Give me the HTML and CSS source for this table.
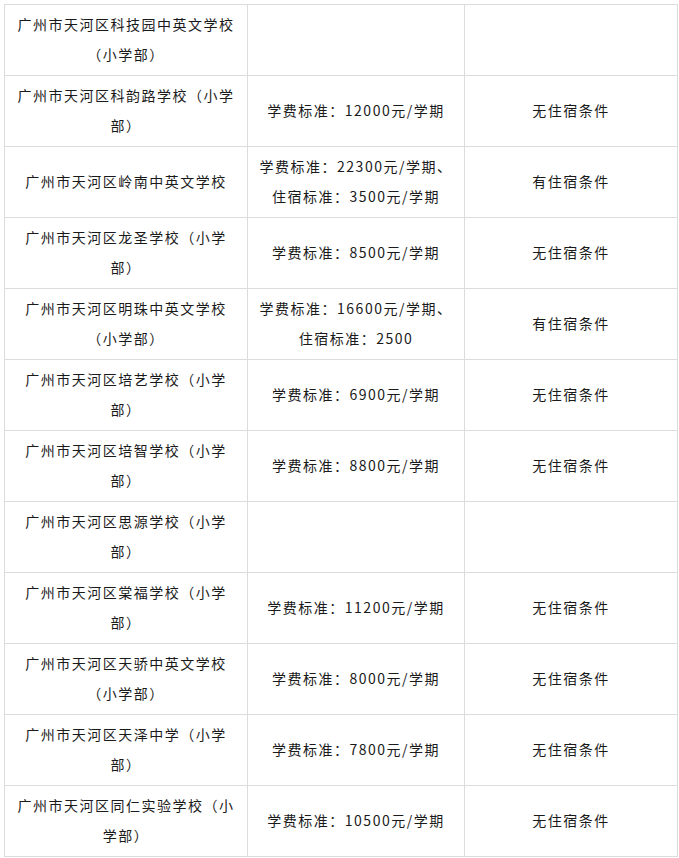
FILE: index.html
```html
<!DOCTYPE html>
<html lang="zh-CN">
<head>
<meta charset="utf-8">
<title>学校收费</title>
<link rel="stylesheet" href="styles.css">
</head>
<body>
<table class="fees">
  <colgroup>
    <col class="c-name">
    <col class="c-fee">
    <col class="c-room">
  </colgroup>
  <tbody>
    <tr><td>广州市天河区科技园中英文学校（小学部）</td><td></td><td></td></tr>
    <tr><td>广州市天河区科韵路学校（小学部）</td><td>学费标准：12000元/学期</td><td>无住宿条件</td></tr>
    <tr><td>广州市天河区岭南中英文学校</td><td>学费标准：22300元/学期、<br>住宿标准：3500元/学期</td><td>有住宿条件</td></tr>
    <tr><td>广州市天河区龙圣学校（小学部）</td><td>学费标准：8500元/学期</td><td>无住宿条件</td></tr>
    <tr><td>广州市天河区明珠中英文学校（小学部）</td><td>学费标准：16600元/学期、<br>住宿标准：2500</td><td>有住宿条件</td></tr>
    <tr><td>广州市天河区培艺学校（小学部）</td><td>学费标准：6900元/学期</td><td>无住宿条件</td></tr>
    <tr><td>广州市天河区培智学校（小学部）</td><td>学费标准：8800元/学期</td><td>无住宿条件</td></tr>
    <tr><td>广州市天河区思源学校（小学部）</td><td></td><td></td></tr>
    <tr><td>广州市天河区棠福学校（小学部）</td><td>学费标准：11200元/学期</td><td>无住宿条件</td></tr>
    <tr><td>广州市天河区天骄中英文学校（小学部）</td><td>学费标准：8000元/学期</td><td>无住宿条件</td></tr>
    <tr><td>广州市天河区天泽中学（小学部）</td><td>学费标准：7800元/学期</td><td>无住宿条件</td></tr>
    <tr><td>广州市天河区同仁实验学校（小学部）</td><td>学费标准：10500元/学期</td><td>无住宿条件</td></tr>
  </tbody>
</table>
</body>
</html>
```

FILE: styles.css
```css
html, body {
  margin: 0;
  padding: 0;
  background: #fff;
}
body {
  padding: 4px 0 0 4px;
  font-family: "Noto Sans CJK SC", "Noto Sans", sans-serif;
  font-size: 14px;
  color: #1a1a1a;
}
.fees {
  border-collapse: collapse;
  table-layout: fixed;
  width: 673px;
}
.c-name { width: 243px; }
.c-fee { width: 217px; }
.c-room { width: 213px; }
.fees td {
  border: 1px solid #dcdcdc;
  height: 71px;
  padding: 0 10px 2px;
  text-align: center;
  vertical-align: middle;
  line-height: 30px;
  letter-spacing: 1.5px;
  box-sizing: border-box;
}
```
